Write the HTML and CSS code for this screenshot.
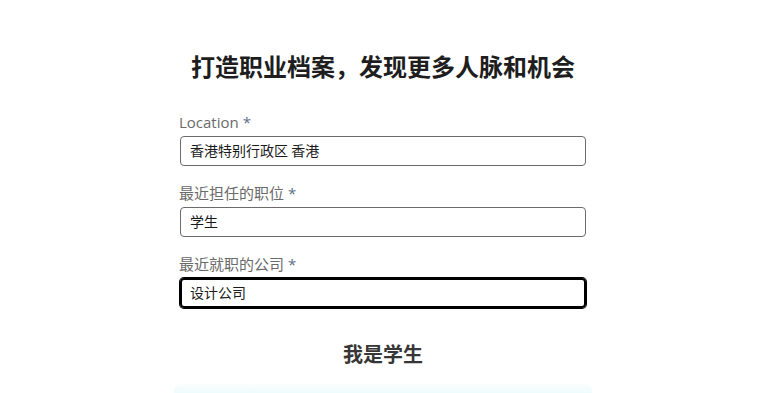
FILE: index.html
```html
<!DOCTYPE html>
<html lang="zh-CN">
<head>
<meta charset="utf-8">
<title>打造职业档案</title>
<link rel="stylesheet" href="styles.css">
</head>
<body>
<main class="page">
  <h1 class="title">打造职业档案，发现更多人脉和机会</h1>
  <form class="form">
    <div class="field">
      <label class="label">Location <span class="req">*</span></label>
      <div class="input">香港特别行政区 香港</div>
    </div>
    <div class="field">
      <label class="label">最近担任的职位 <span class="req">*</span></label>
      <div class="input">学生</div>
    </div>
    <div class="field">
      <label class="label">最近就职的公司 <span class="req">*</span></label>
      <div class="input input--focus">设计公司</div>
    </div>
  </form>
  <h2 class="subtitle">我是学生</h2>
  <div class="card-edge"></div>
</main>
</body>
</html>
```
FILE: styles.css
```css
html, body {
  margin: 0;
  background: #fff;
  overflow: hidden;
}
body {
  padding-left: 7px;
  font-family: "Noto Sans", "Noto Sans CJK SC", sans-serif;
  color: #222;
}
.page {
  width: 406px;
  margin: 0 auto;
  padding-top: 50px;
}
.title {
  margin: 0;
  font-size: 24px;
  line-height: 32px;
  font-weight: 700;
  text-align: center;
  color: #1e1e1e;
  font-family: "Noto Sans CJK SC", sans-serif;
  white-space: nowrap;
}
.form {
  margin-top: 30px;
  display: flex;
  flex-direction: column;
  gap: 17px;
}
.field {
  display: flex;
  flex-direction: column;
  gap: 4px;
}
.label {
  font-size: 15px;
  line-height: 20px;
  color: #6a6a6a;
  margin-left: -1px;
  font-family: "Open Sans", "Noto Sans CJK SC", sans-serif;
}
.req {
  color: #5b7088;
}
.input {
  box-sizing: border-box;
  height: 30px;
  border: 1px solid #6b6b6b;
  border-radius: 4px;
  padding: 0 9px;
  font-size: 14px;
  line-height: 27px;
  color: #1a1a1a;
  font-family: "Noto Sans CJK SC", sans-serif;
}
.input--focus {
  border: 2px solid #000;
  box-shadow: 0 0 0 1px #000;
  padding-left: 8px;
  line-height: 25px;
}
.subtitle {
  margin: 32px 0 0;
  font-size: 20px;
  line-height: 28px;
  font-weight: 700;
  text-align: center;
  color: #363636;
  font-family: "Noto Sans CJK SC", sans-serif;
}
.card-edge {
  margin: 16px -6px 0;
  height: 10px;
  border-radius: 6px 6px 0 0;
  background: linear-gradient(to bottom, #fcfdfd 0px, #f5fcfd 4px, #ecfcfe 10px);
}
```
